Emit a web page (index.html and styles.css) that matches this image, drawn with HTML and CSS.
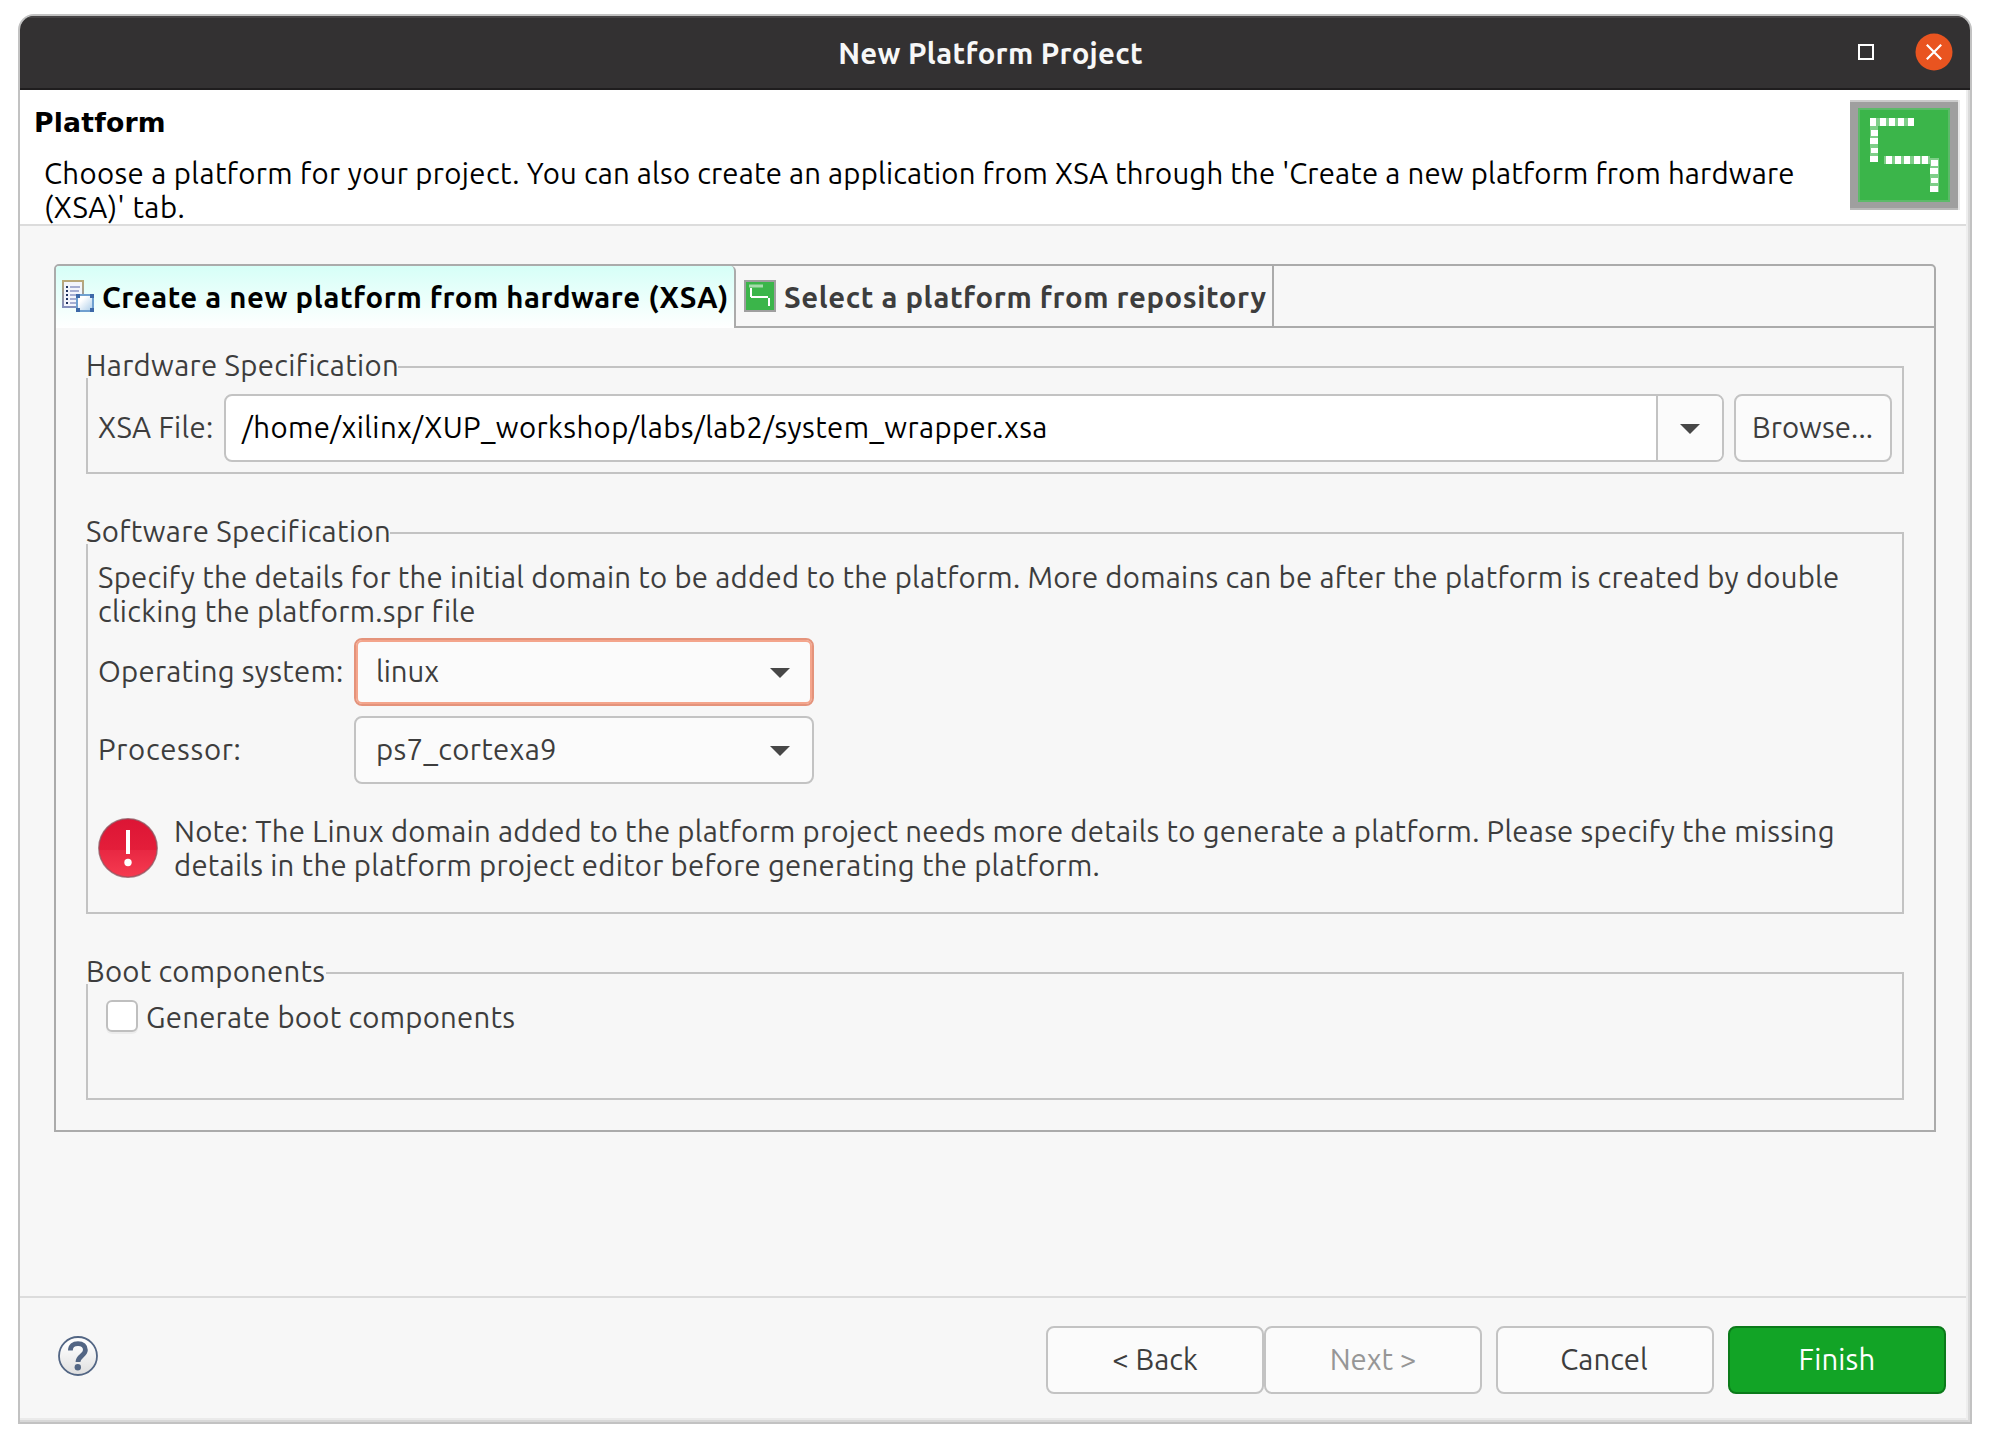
FILE: index.html
```
<!DOCTYPE html>
<html lang="en">
<head>
<meta charset="utf-8">
<title>New Platform Project</title>
<link rel="stylesheet" href="styles.css">
</head>
<body>
<div class="window">
  <header class="titlebar">
    <div class="titlebar-title">New Platform Project</div>
    <div class="window-controls">
      <svg class="maximize" width="16" height="16" viewBox="0 0 16 16"><rect x="1" y="1" width="14" height="14" fill="none" stroke="#fff" stroke-width="2"/></svg>
      <svg class="close" width="38" height="38" viewBox="0 0 38 38"><circle cx="19" cy="19" r="18.5" fill="#e95420"/><path d="M11.8 11.8 26.2 26.2M26.2 11.8 11.8 26.2" stroke="#fff" stroke-width="2.2" fill="none"/></svg>
    </div>
  </header>

  <div class="content">
    <section class="banner">
      <div class="banner-text">
        <h1 class="banner-title">Platform</h1>
        <p class="banner-desc"><span class="t-intro">Choose a platform for your project. </span><span class="t-desc">You can also create an application from XSA through the 'Create a new platform from hardware</span><br><span class="t-desc2">(XSA)' tab.</span></p>
      </div>
      <svg class="logo" width="110" height="110" viewBox="0 0 110 110" shape-rendering="crispEdges">
        <rect width="108" height="110" fill="#9f9f9f"/>
        <rect width="108" height="2" fill="#cbcbcb"/><rect y="108" width="108" height="2" fill="#b9b9b9"/><rect x="108" width="2" height="110" fill="#e8e8e8"/>
        <rect x="8" y="8" width="92" height="94" fill="#5cba69"/>
        <rect x="10" y="10" width="88" height="90" fill="#3bb54a"/>
        <g fill="#7fcf89">
          <rect x="20" y="18" width="44" height="8"/><rect x="20" y="26" width="8" height="36"/>
          <rect x="34" y="56" width="46" height="8"/><rect x="80" y="58" width="9" height="34"/>
        </g>
        <g fill="#fff">
          <rect x="20" y="18" width="6" height="8"/><rect x="30" y="18" width="6" height="8"/><rect x="39" y="18" width="6" height="8"/><rect x="48" y="18" width="6" height="8"/><rect x="58" y="18" width="6" height="8"/>
          <rect x="21" y="30" width="7" height="6"/><rect x="20" y="38" width="8" height="6"/><rect x="21" y="48" width="7" height="5"/><rect x="20" y="56" width="8" height="6"/>
          <rect x="36" y="56" width="6" height="8"/><rect x="45" y="56" width="6" height="8"/><rect x="54" y="56" width="6" height="8"/><rect x="64" y="56" width="6" height="8"/><rect x="72" y="56" width="6" height="8"/>
          <rect x="81" y="60" width="7" height="6"/><rect x="80" y="68" width="8" height="6"/><rect x="81" y="78" width="7" height="5"/><rect x="80" y="86" width="8" height="6"/>
        </g>
      </svg>
    </section>

    <main class="page">
      <div class="tabfolder">
        <nav class="tabs">
          <div class="tab tab-active">
            <svg width="32" height="32" viewBox="0 0 32 32">
              <defs>
                <linearGradient id="sheet" x1="0" y1="0" x2="0" y2="1"><stop offset="0" stop-color="#b9a878"/><stop offset="1" stop-color="#8490bd"/></linearGradient>
                <linearGradient id="chip" x1="0" y1="0" x2="1" y2="1"><stop offset="0.3" stop-color="#fff"/><stop offset="1" stop-color="#a9cbe8"/></linearGradient>
              </defs>
              <rect x="1" y="1" width="20" height="26" fill="#f3f5fc" stroke="url(#sheet)" stroke-width="2"/>
              <path d="M4 7h2M4 11h2M4 15h2M4 19h2M4 23h2" stroke="#20335f" stroke-width="2"/>
              <path d="M8 7h10M8 11h9M8 15h6M8 19h6M8 23h6" stroke="#a6aed2" stroke-width="2"/>
              <rect x="15" y="15" width="16" height="16" fill="url(#chip)" stroke="#6fa0d0" stroke-width="2"/>
              <path d="M14 14h4v4h-4zM28 14h4v4h-4zM14 28h4v4h-4zM28 28h4v4h-4z" fill="#3d68a8"/>
            </svg>
            <span class="t-tab1">Create a new platform from hardware (XSA)</span>
          </div>
          <div class="tab">
            <svg width="32" height="32" viewBox="0 0 32 32">
              <rect x="1" y="1" width="30" height="30" fill="#3bb54a" stroke="#9f9f9f" stroke-width="2"/>
              <path d="M5 6h14" fill="none" stroke="#a5dcab" stroke-width="3"/>
              <path d="M7 8v9M7 17h17M25 18v8" fill="none" stroke="#fff" stroke-width="2"/>
            </svg>
            <span class="t-tab2">Select a platform from repository</span>
          </div>
          <div class="tabs-rest"></div>
        </nav>

        <div class="panel">
          <section class="group">
            <div class="legend"><span class="legend-text w-hw">Hardware Specification</span><span class="legend-rule"></span></div>
            <div class="group-body hardware">
              <label class="t-xsa">XSA File:</label>
              <div class="combo-entry">
                <div class="entry">/home/xilinx/XUP_workshop/labs/lab2/system_wrapper.xsa</div>
                <div class="entry-arrow"><svg width="20" height="10" viewBox="0 0 20 10"><path d="M0 0h20L10 10z" fill="#474747"/></svg></div>
              </div>
              <button class="button browse">Browse...</button>
            </div>
          </section>

          <section class="group">
            <div class="legend"><span class="legend-text w-sw">Software Specification</span><span class="legend-rule"></span></div>
            <div class="group-body software">
              <p class="para">Specify the details for the initial domain to be added to the platform. More domains can be after the platform is created by double<br>clicking the platform.spr file</p>
              <div class="fields">
                <label>Operating system:</label>
                <div class="select select-focus"><span class="t-plain">linux</span><svg width="20" height="10" viewBox="0 0 20 10"><path d="M0 0h20L10 10z" fill="#474747"/></svg></div>
                <label class="t-proc">Processor:</label>
                <div class="select"><span class="t-cpu">ps7_cortexa9</span><svg width="20" height="10" viewBox="0 0 20 10"><path d="M0 0h20L10 10z" fill="#474747"/></svg></div>
              </div>
              <div class="note">
                <svg class="note-icon" width="60" height="60" viewBox="0 0 60 60">
                  <defs><linearGradient id="err" x1="0" y1="0" x2="0" y2="1"><stop offset="0" stop-color="#dc1535"/><stop offset="0.53" stop-color="#e41e3a"/><stop offset="0.54" stop-color="#e82843"/><stop offset="1" stop-color="#f63a50"/></linearGradient></defs>
                  <circle cx="30" cy="30" r="29.2" fill="url(#err)" stroke="#8d5660" stroke-opacity="0.75" stroke-width="1.5"/>
                  <path d="M28 12h4v24h-4z" fill="#fff"/><circle cx="30" cy="44.5" r="3.7" fill="#fff"/>
                </svg>
                <p class="para">Note: The Linux domain added to the platform project needs more details to generate a platform. Please specify the missing<br>details in the platform project editor before generating the platform.</p>
              </div>
            </div>
          </section>

          <section class="group">
            <div class="legend"><span class="legend-text w-boot">Boot components</span><span class="legend-rule"></span></div>
            <div class="group-body boot">
              <span class="checkbox"></span><label class="t-gen">Generate boot components</label>
            </div>
          </section>
        </div>
      </div>
    </main>

    <footer class="actions">
      <svg class="help" width="40" height="40" viewBox="0 0 40 40">
        <defs><linearGradient id="hg" x1="0" y1="0" x2="0" y2="1"><stop offset="0.2" stop-color="#fdfdfd"/><stop offset="1" stop-color="#dedede"/></linearGradient></defs>
        <circle cx="20" cy="20" r="19" fill="url(#hg)" stroke="#536684" stroke-width="1.8"/>
        <path d="M12.4 14.6C12.4 9.8 15.4 7.6 20 7.6s7.4 2.6 7.4 6.4c0 5.4-7.4 5.8-7.4 12" fill="none" stroke="#536684" stroke-width="4.8"/>
        <circle cx="19.8" cy="31.2" r="3.2" fill="#536684"/>
      </svg>
      <div class="buttons">
        <button class="button">&lt; Back</button>
        <button class="button button-disabled">Next &gt;</button>
        <button class="button gap-before nudge">Cancel</button>
        <button class="button button-primary gap-before">Finish</button>
      </div>
    </footer>
  </div>
</div>
</body>
</html>
```
FILE: styles.css
```
* { box-sizing: border-box; }

body {
  margin: 0;
  padding: 14px 18px 18px;
  background: #fff;
  color: #3d3d3d;
  font: 29.33px/34px Ubuntu, "Noto Sans", sans-serif;
  letter-spacing: 0.26px;
  white-space: nowrap;
}

h1, p { margin: 0; }

.window {
  width: 1954px;
  height: 1410px;
  border: 2px solid #c2c2c2;
  border-radius: 16px 16px 0 0;
  overflow: hidden;
  display: flex;
  flex-direction: column;
}

.titlebar {
  height: 74px;
  background: #333132;
  border-top: 2px solid #454344;
  border-bottom: 2px solid #1f1d1e;
  display: grid;
  grid-template-columns: 1fr auto 1fr;
  align-items: center;
  color: #fff;
  flex: none;
}

.titlebar-title {
  grid-column: 2;
  font-weight: 700;
  color: #f7f7f7;
  letter-spacing: 0.28px;
  padding-right: 9px;
  padding-top: 1px;
}

.window-controls {
  display: flex;
  align-items: center;
  justify-content: flex-end;
  gap: 41px;
  padding-right: 17px;
  padding-bottom: 2px;
}

.content {
  position: relative;
  flex: 1;
  display: flex;
  flex-direction: column;
  background: #f7f7f7;
}

/* soft inner edge on the right and bottom of the frame */
.content::after {
  content: "";
  position: absolute;
  inset: 0;
  pointer-events: none;
  box-shadow: inset -2px 0 #dadada, inset 0 -2px #d8d8d8, inset -4px 0 #eeeeee, inset 0 -4px #eaeaea;
}

.banner {
  height: 136px;
  background: #fff;
  border-bottom: 2px solid #dcdcdc;
  display: flex;
  justify-content: space-between;
  color: #000;
}

.banner-text { padding: 16px 0 0 14px; }

.banner-title {
  font: 700 26.67px/34px "DejaVu Sans", sans-serif;
  letter-spacing: 0.2px;
}

.banner-desc { padding: 17px 0 0 10px; }
.t-intro { letter-spacing: 0.37px; }
.t-desc { letter-spacing: 0.2px; }
.t-desc2 { letter-spacing: 0.5px; }

.logo { margin: 10px 10px 0 0; }

.page {
  flex: 1;
  padding: 38px 34px 0;
}

.tabfolder {
  height: 868px;
  border: 2px solid #ababab;
  border-radius: 5px 5px 0 0;
  overflow: hidden;
}

.tabs {
  display: flex;
  height: 62px;
  font-weight: 700;
}

.tab {
  display: flex;
  align-items: flex-start;
  gap: 8px;
  width: 538px;
  padding: 14px 0 0 8px;
  border-right: 2px solid #ababab;
  border-bottom: 2px solid #ababab;
}

.tab svg { flex: none; }
.tab span { padding-top: 1px; }
.t-tab1 { letter-spacing: 0.56px; }
.t-tab2 { letter-spacing: 0.58px; }

.tab-active {
  width: 680px;
  padding-left: 6px;
  color: #000;
  border-bottom: 0;
  border-top-right-radius: 5px;
  background: linear-gradient(#d6fff7, #ffffff);
}

.tabs-rest {
  flex: 1;
  border-bottom: 2px solid #ababab;
}

.panel {
  padding: 20px 30px 0;
  display: flex;
  flex-direction: column;
  gap: 40px;
}

.legend {
  display: flex;
  height: 30px;
}

.legend-text { flex: none; padding-top: 1px; }
.w-hw { width: 312px; letter-spacing: 0.34px; }
.w-sw { width: 304px; letter-spacing: 0.36px; }
.w-boot { width: 240px; }

.legend-rule {
  flex: 1;
  margin-top: 18px;
  border-top: 2px solid #c3c3c3;
  border-right: 2px solid #c3c3c3;
}

.group-body {
  border: 2px solid #c3c3c3;
  border-top: 0;
}

.hardware {
  height: 96px;
  padding: 16px 10px 0;
  display: flex;
}

.hardware label { width: 126px; padding-top: 17px; }
.hardware .t-xsa { letter-spacing: 0.28px; }

.combo-entry {
  display: flex;
  width: 1500px;
  height: 68px;
  border: 2px solid #c3c3c3;
  border-radius: 8px;
  overflow: hidden;
  background: #fff;
}

.entry {
  flex: 1;
  padding: 15px 0 0 16px;
  color: #000;
  letter-spacing: 0.41px;
}

.entry-arrow {
  width: 66px;
  padding-top: 2px;
  display: grid;
  place-items: center;
  border-left: 2px solid #c3c3c3;
  background: #fbfbfb;
}

.button {
  width: 218px;
  height: 68px;
  padding: 0 0 1px;
  border: 2px solid #c3c3c3;
  border-radius: 8px;
  background: #fbfbfb;
  color: #3d3d3d;
  font: inherit;
  letter-spacing: 0;
}

.browse { width: 158px; margin-left: 10px; padding-right: 1px; letter-spacing: 0.1px; }
.button-disabled { color: #969696; }
.button-primary { background: #12a426; border-color: #0b7a1a; color: #fff; letter-spacing: 0.15px; }
.gap-before { margin-left: 14px; }
.nudge { padding-right: 2px; }

.software { height: 370px; padding: 17px 10px 0; }

.fields {
  display: grid;
  grid-template-columns: 246px 460px;
  column-gap: 10px;
  row-gap: 10px;
  margin-top: 9px;
}

.fields label { padding-top: 17px; }
.fields .t-proc { letter-spacing: 0.7px; }
.t-plain { letter-spacing: 0; }
.t-cpu { letter-spacing: 0.36px; }

.select {
  display: flex;
  justify-content: space-between;
  align-items: center;
  height: 68px;
  padding: 0 22px 0 20px;
  border: 2px solid #c3c3c3;
  border-radius: 8px;
  background: #fbfbfb;
}

.select svg { margin-top: 2px; }

.select-focus {
  border-color: #e4937b;
  box-shadow: inset 0 0 0 2px #f4a58c;
}

.note {
  display: flex;
  gap: 16px;
  margin-top: 31px;
}

.note-icon { margin-top: 3px; }

.boot {
  height: 116px;
  padding: 16px 0 0 18px;
  display: flex;
  gap: 8px;
}

.t-gen { padding-top: 1px; letter-spacing: 0.26px; }

.checkbox {
  width: 32px;
  height: 32px;
  border: 2px solid #bfbfbf;
  border-radius: 6px;
  background: #fff;
  box-shadow: 0 2px #ececec;
}

.actions {
  height: 126px;
  border-top: 2px solid #dcdcdc;
  padding: 28px 24px 0 38px;
  display: flex;
  justify-content: space-between;
}

.help { margin-top: 10px; }
.buttons { display: flex; }
```
